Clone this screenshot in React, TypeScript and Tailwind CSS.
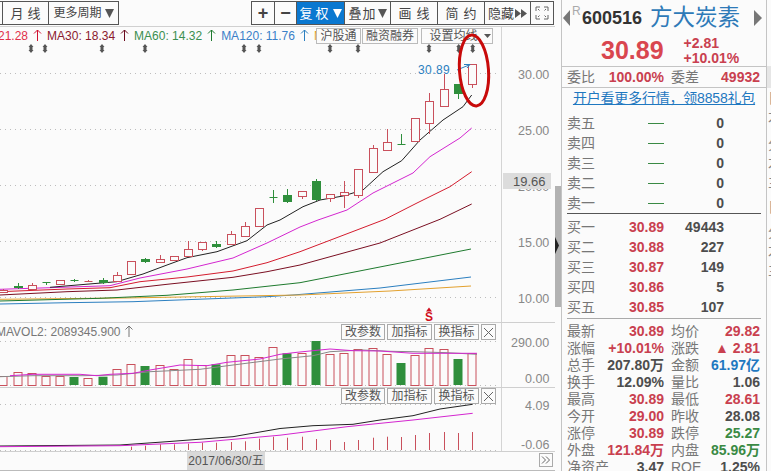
import React from 'react';

const X = (i: number) => 3.3 + 14.2 * i;
const RED = '#c9505c';
const GREEN = '#2f8f3c';

// [index, rising, bodyTop, bodyBottom, wickTop, wickBottom]
const candles: [number, boolean, number, number, number, number][] = [
  [0, true, 290, 292, 289, 293], [1, false, 286, 288, 283, 289], [2, true, 285, 289, 283, 289],
  [3, false, 282, 283, 282, 285], [4, true, 280, 284, 280, 284], [5, false, 280, 281, 279, 282],
  [6, true, 281, 282, 280, 282], [7, false, 280, 283, 278, 284], [8, true, 275, 281, 272, 281],
  [9, true, 261, 274, 261, 274], [10, false, 259, 262, 258, 263], [11, true, 259, 262, 255, 262],
  [12, true, 256, 260, 256, 260], [13, true, 249, 256, 241, 256], [14, true, 242, 249, 242, 251],
  [15, false, 244, 247, 241, 248], [16, true, 234, 244, 231, 244], [17, true, 226, 236, 222, 236],
  [18, true, 208, 226, 208, 226], [19, false, 197, 198, 190, 203], [20, false, 195, 202, 189, 203],
  [21, true, 191, 196, 191, 199], [22, false, 181, 200, 179, 201], [23, true, 194, 198, 194, 202],
  [24, true, 192, 195, 181, 208], [25, true, 169, 195, 169, 198], [26, true, 148, 172, 145, 173],
  [27, true, 142, 150, 129, 150], [28, false, 144, 145, 134, 145], [29, true, 118, 141, 118, 141],
  [30, true, 101, 123, 93, 134], [31, true, 89, 106, 74, 106], [32, false, 84, 94, 84, 99],
  [33, true, 64, 84, 64, 88],
];

const maLines: [string, string][] = [
  ['#2b7fc0', '0,304 67,302.7 133,301.7 267,296.7 293,295 380,288 471,277'],
  ['#e3a12e', '0,299.3 123,298 200,296.7 300,295 390,291 471,286'],
  ['#1e7a2e', '0,301 100,298.3 167,295.3 233,290 300,282.7 390,265 471,249'],
  ['#7a0f22', '0,295 67,291.7 117,290 167,284.3 233,277.3 267,271.7 300,265 380,243 440,219.3 471.7,204'],
  ['#d41c2e', '0,291.7 67,289 110,287.7 140,281.7 187,277 233,271 267,262.7 300,251.7 385,219.3 417,203 450,186.7 471.7,171.7'],
  ['#d426d0', '0,289.3 50,287.7 110,285.7 140,278 187,269 233,258 267,243 300,227 318,220 347,210 373,193 413,173 430,156.7 460,138 471.7,128'],
  ['#222222', '50,287.3 116.7,281.7 143,274 167,265 187,257.7 217,251.7 247,240.7 267,225 280,220 303,206.7 320,200 343,196 363,190 383,171.7 401.7,160.7 420,140 443,120 463,106.7 471.7,95'],
];

// bar top, bottom is y=385; green bars are the falling days
const volTops = [376, 371.7, 373.3, 375.7, 375.7, 377, 378.3, 376.7, 369.3, 364.3, 366, 365.3, 369.3, 359.3, 365.3, 364.3, 355.3, 355.3, 357.3, 347.3, 353.3, 352.7, 341, 354.3, 352.7, 349.3, 348.3, 354, 363, 355, 348.3, 349.3, 359, 353.3];
const volGreen = [5, 7, 10, 15, 20, 22, 28, 32];

const macdTops = [446.7, 445.7, 444.3, 444.3, 443.7, 442.7, 442.7, 442, 441.3, 438.7, 436.7, 437.7, 436.7, 439, 440, 442, 440, 437.7, 436.7, 437, 435, 433, 432, 433, 432];

const markers = [31, 45, 102, 145, 244, 259, 330, 358, 429, 458.7, 472.7];
const grid = [73.5, 129.5, 185.5, 241.5, 297.5];

const Tri = ({ dir = 'down', className }: { dir?: 'down' | 'right' | 'left'; className: string }) => {
  const d = dir === 'down' ? 'M0 0H10L5 10Z' : dir === 'right' ? 'M0 0L10 5L0 10Z' : 'M10 0L0 5L10 10Z';
  return (
    <svg viewBox="0 0 10 10" preserveAspectRatio="none" className={className}>
      <path d={d} fill="currentColor" />
    </svg>
  );
};

const ToolBtn = ({ className, children }: { className: string; children?: React.ReactNode }) => (
  <div className={`h-[24px] -ml-px flex items-center justify-center border border-[#555] whitespace-nowrap ${className}`}>
    {children}
  </div>
);

const UpArrow = ({ color }: { color: string }) => (
  <svg width="9" height="13" viewBox="0 0 9 13" className="shrink-0">
    <path d="M4.5 12V1M1 4.5L4.5 1L8 4.5" fill="none" stroke={color} strokeWidth="1" />
  </svg>
);

const MiniBtn = ({ className, children }: { className: string; children: React.ReactNode }) => (
  <div className={`h-[16px] flex items-center justify-center border border-[#aaa] bg-[#fbfbfb] text-[12px] leading-none text-[#555] whitespace-nowrap ${className}`}>
    {children}
  </div>
);

const IndicatorBar = ({ className }: { className: string }) => (
  <div className={`absolute left-[341px] flex gap-[2px] ${className}`}>
    <MiniBtn className="w-[44px]">改参数</MiniBtn>
    <MiniBtn className="w-[45px]">加指标</MiniBtn>
    <MiniBtn className="w-[45px]">换指标</MiniBtn>
    <MiniBtn className="w-[15px]">
      <svg width="11" height="11" viewBox="0 0 11 11">
        <path d="M1 1L10 10M10 1L1 10" stroke="#666" strokeWidth="1" />
      </svg>
    </MiniBtn>
  </div>
);

const sellRows = ['卖五', '卖四', '卖三', '卖二', '卖一'];
const buyRows: [string, string, string][] = [
  ['买一', '30.89', '49443'],
  ['买二', '30.88', '227'],
  ['买三', '30.87', '149'],
  ['买四', '30.86', '5'],
  ['买五', '30.85', '107'],
];

const r = 'text-[#c9404f]';
const k = 'text-[#4d4d4d]';
const g = 'text-[#3a8a44]';
const stats: [string, string, string, string, string, string][] = [
  ['最新', '30.89', r, '均价', '29.82', r],
  ['涨幅', '+10.01%', r, '涨跌', '▲ 2.81', r],
  ['总手', '207.80万', k, '金额', '61.97亿', 'text-[#1f78c0]'],
  ['换手', '12.09%', k, '量比', '1.06', k],
  ['最高', '30.89', r, '最低', '28.61', r],
  ['今开', '29.00', r, '昨收', '28.08', k],
  ['涨停', '30.89', r, '跌停', '25.27', g],
  ['外盘', '121.84万', r, '内盘', '85.96万', g],
  ['净资产', '3.47', k, 'ROE', '1.25%', k],
];

const Label = ({ children }: { children: React.ReactNode }) => (
  <span className="text-[14px] text-[#777]">{children}</span>
);

const Val = ({ className, children }: { className: string; children: React.ReactNode }) => (
  <span className={`text-[14px] font-bold ${className}`}>{children}</span>
);

const App: React.FC = () => {
  return (
    <div className="w-[771px] h-[471px] flex overflow-hidden bg-[#fbfbfb] leading-none [font-family:'Liberation_Sans','Noto_Sans_CJK_SC',sans-serif]">
      {/* chart column */}
      <div className="w-[555px] shrink-0 flex flex-col">
        <div className="h-[27px] shrink-0 pt-px pr-px flex border-b border-[#d0d0d0] text-[13px] text-[#444]">
          <ToolBtn className="w-[4px]" />
          <ToolBtn className="w-[47px] tracking-[4px] pl-[4px]">月线</ToolBtn>
          <ToolBtn className="w-[71px] gap-[3px] text-[12px]">
            更多周期
            <Tri className="w-[9px] h-[9px] text-[#555]" />
          </ToolBtn>
          <div className="flex-1" />
          <ToolBtn className="w-[24px]"><span className="font-bold text-[18px]">+</span></ToolBtn>
          <ToolBtn className="w-[23px]"><span className="font-bold text-[18px]">−</span></ToolBtn>
          <ToolBtn className="w-[49px] gap-px bg-[#0a78d0] text-white tracking-[3px]">
            复权
            <Tri className="w-[9px] h-[9px] text-white" />
          </ToolBtn>
          <ToolBtn className="w-[47px] gap-[1px] tracking-[1px]">
            叠加
            <Tri className="w-[9px] h-[9px] text-[#555]" />
          </ToolBtn>
          <ToolBtn className="w-[48px] tracking-[5px] pl-[5px]">画线</ToolBtn>
          <ToolBtn className="w-[48px] tracking-[5px] pl-[5px]">简约</ToolBtn>
          <ToolBtn className="w-[47px]">
            隐藏
            <Tri dir="right" className="w-[6px] h-[9px] ml-px text-[#555]" />
            <Tri dir="right" className="w-[6px] h-[9px] text-[#555]" />
          </ToolBtn>
          <ToolBtn className="w-[24px]">
            <svg width="14" height="14" viewBox="0 0 14 14" fill="none" stroke="#666" strokeWidth="1">
              <path d="M1 5V1H5M9 1H13V5M13 9V13H9M5 13H1V9M3 3L4.5 4.5M11 3L9.5 4.5M11 11L9.5 9.5M3 11L4.5 9.5" />
            </svg>
          </ToolBtn>
        </div>

        {/* price pane */}
        <div className="h-[296px] shrink-0 relative border-b border-[#cfcfcf]">
          <svg width="555" height="295" viewBox="0 27 555 295" className="block">
            {grid.map((y) => (
              <line key={y} x1="0" x2="500" y1={y} y2={y} stroke="#bdbdbd" strokeDasharray="1 4" />
            ))}
            <line x1="501.5" x2="501.5" y1="27" y2="322" stroke="#d4d4d4" />
            {maLines.map(([c, pts]) => (
              <polyline key={c} points={pts} fill="none" stroke={c} strokeWidth="1" />
            ))}
            {candles.map(([i, up, t, b, wt, wb]) => {
              const x = Math.round(X(i)) + 0.5;
              const c = up ? RED : GREEN;
              return (
                <g key={i}>
                  <line x1={x} x2={x} y1={wt} y2={wb} stroke={c} />
                  {b - t <= 1 ? (
                    <line x1={x - 4} x2={x + 4} y1={t + 0.5} y2={t + 0.5} stroke={c} />
                  ) : up ? (
                    <rect x={x - 4} y={t + 0.5} width="8" height={b - t} fill="#fbfbfb" stroke={c} />
                  ) : (
                    <rect x={x - 4.5} y={t} width="9" height={b - t} fill={c} />
                  )}
                </g>
              );
            })}
            {markers.map((x) => (
              <path key={x} d={`M${x} 44L${x + 2.5} 47H${x + 1.5}V50H${x + 2.5}L${x} 53L${x - 2.5} 50H${x - 1.5}V47H${x - 2.5}Z`} fill="#555" />
            ))}
            <text x="418" y="74" fontSize="12" fill="#2b7fc0" letterSpacing="0.4">30.89</text>
            <path d="M457 70L469 65M464 64.5L470 64.5L467 68" fill="none" stroke="#2b7fc0" />
            <g fontSize="12.5" fill="#888">
              <text x="518" y="79">30.00</text>
              <text x="518" y="135">25.00</text>
              <text x="518" y="191">20.00</text>
              <text x="518" y="247">15.00</text>
              <text x="518" y="303">10.00</text>
            </g>
            <rect x="503" y="173" width="48" height="16" fill="#dcdcdc" />
            <text x="513" y="186" fontSize="13" fill="#555">19.66</text>
            <path d="M429 307.5L432 311.5H426Z" fill="#d01020" />
            <text x="425" y="320.5" fontSize="12" fontWeight="bold" fill="#d01020">S</text>
          </svg>
          <div className="absolute left-[-2px] top-[2px] flex items-center gap-[5px] text-[12px] whitespace-nowrap">
            <span className="text-[#e0304a]">21.28</span>
            <UpArrow color="#d01030" />
            <span className="text-[#8b1a2e]">MA30: 18.34</span>
            <UpArrow color="#6a0a1e" />
            <span className="text-[#3a8f50]">MA60: 14.32</span>
            <UpArrow color="#1e7a2e" />
            <span className="text-[#3a80c8]">MA120: 11.76</span>
            <UpArrow color="#2b7fc0" />
            <span className="text-[#e8a030]">M</span>
          </div>
          <div className="absolute left-[316px] top-[1px] flex gap-[1px]">
            <MiniBtn className="w-[45px] border-[#bbb]">沪股通</MiniBtn>
            <MiniBtn className="w-[56px] border-[#bbb]">融资融券</MiniBtn>
            <MiniBtn className="w-[72px] ml-[2px] gap-[6px] border-[#bbb] pl-[6px]">
              设置均线
              <Tri className="w-[7px] h-[4px] text-[#555]" />
            </MiniBtn>
          </div>
          <svg width="555" height="295" viewBox="0 27 555 295" className="absolute left-0 top-0 pointer-events-none">
            <ellipse cx="474" cy="70.5" rx="14.5" ry="35.5" transform="rotate(-4 474 70.5)" fill="none" stroke="#c80a0a" strokeWidth="3" />
          </svg>
        </div>

        {/* volume pane */}
        <div className="h-[64px] shrink-0 relative">
          <svg width="555" height="64" viewBox="0 323 555 64" className="block">
            <line x1="0" x2="500" y1="341.5" y2="341.5" stroke="#bdbdbd" strokeDasharray="1 4" />
            <line x1="0" x2="500" y1="385.5" y2="385.5" stroke="#bdbdbd" strokeDasharray="1 4" />
            <line x1="501.5" x2="501.5" y1="323" y2="387" stroke="#d4d4d4" />
            {volTops.map((t, i) => {
              const x = Math.round(X(i));
              return volGreen.includes(i) ? (
                <rect key={i} x={x - 4.5} y={t} width="9" height={385 - t} fill={GREEN} />
              ) : (
                <rect key={i} x={x - 4} y={Math.round(t) + 0.5} width="8" height={385 - Math.round(t)} fill="none" stroke={RED} />
              );
            })}
            <polyline points="0,376.7 33,375.7 83,375.7 117,375 150,371.7 200,369.3 233,365 280,359 297,357.3 313,355.7 330,351.7 363,350 390,351.3 413,351.7 447,352.7 477,354.3" fill="none" stroke="#888" />
            <polyline points="10,375.7 33,374.3 80,374.3 97,375.7 110,374.3 133,373.3 150,370 180,365 207,365.7 227,362.3 260,359 280,354.3 297,352.3 313,350.7 330,349 353,350.7 380,351 413,353.3 447,353.3 477,353.3" fill="none" stroke="#d426d0" />
            <text x="-4" y="336" fontSize="12" fill="#777">MAVOL2: 2089345.900</text>
            <path d="M129 337V326M125.5 329.5L129 326L132.5 329.5" fill="none" stroke="#777" />
            <g fontSize="12.5" fill="#888">
              <text x="511" y="347">290.00</text>
              <text x="525" y="383">0.00</text>
            </g>
          </svg>
          <IndicatorBar className="top-[1px]" />
        </div>

        {/* macd pane */}
        <div className="h-[65px] shrink-0 relative border-b border-t border-[#cfcfcf]">
          <svg width="555" height="63" viewBox="0 388 555 63" className="block">
            <line x1="0" x2="500" y1="404.5" y2="404.5" stroke="#bdbdbd" strokeDasharray="1 4" />
            <line x1="0" x2="500" y1="450.5" y2="450.5" stroke="#bdbdbd" strokeDasharray="1 4" />
            <line x1="501.5" x2="501.5" y1="388" y2="451" stroke="#d4d4d4" />
            {macdTops.map((t, i) => {
              const x = Math.round(X(i + 9)) + 0.5;
              return <line key={i} x1={x} x2={x} y1={t} y2="450" stroke={RED} />;
            })}
            <polyline points="0,446 120,445 167,441.7 233,436.7 280,428.5 313,425.7 353,424.3 380,420 413,415.7 440,409 472.7,404.3" fill="none" stroke="#222" />
            <polyline points="0,446.7 120,445.7 200,442.3 280,435.2 347,426.7 413,420 472.7,413.3" fill="none" stroke="#d426d0" />
            <g fontSize="12.5" fill="#888">
              <text x="525" y="410">4.09</text>
              <text x="521" y="449">-0.06</text>
            </g>
          </svg>
          <IndicatorBar className="top-0" />
        </div>

        {/* date footer */}
        <div className="h-[19px] shrink-0 flex items-start border-b border-[#bbb] pl-[187px] pr-[2px]">
          <div className="w-[78px] h-[18px] flex items-center justify-center bg-[#d9d9d9] text-[12px] text-[#555]">
            2017/06/30/五
          </div>
          <div className="flex-1" />
          <div className="w-[14px] h-[14px] mt-[1px] flex items-center justify-center border border-[#aaa]">
            <svg width="10" height="8" viewBox="0 0 10 8" fill="none" stroke="#666">
              <path d="M1 0.5L4.5 4L1 7.5M5 0.5L8.5 4L5 7.5" />
            </svg>
          </div>
        </div>
      </div>

      {/* splitter */}
      <div className="w-[6px] shrink-0 relative">
        <div className="absolute left-0 right-0 top-[186px] h-[121px] bg-[#b2b2b2]" />
        <Tri dir="right" className="absolute left-0 top-[237px] w-[4px] h-[17px] text-[#222]" />
      </div>

      {/* quote panel */}
      <div className="w-[206px] shrink-0 border-l border-r border-[#c4c4c4]">
        <div className="h-[66px] flex flex-col">
          <div className="h-[36px] flex items-center">
            <Tri dir="left" className="w-[7px] h-[16px] ml-px text-[#777]" />
            <span className="w-[10px] ml-[2px] self-start mt-[5px] text-[12px] text-[#aaa]">R</span>
            <span className="text-[18px] font-bold text-[#333]">600516</span>
            <span className="ml-[8px] text-[22.5px] text-[#2e7ab8]">方大炭素</span>
            <Tri dir="right" className="w-[8px] h-[16px] ml-[14px] text-[#777]" />
          </div>
          <div className="flex items-center pl-[39px]">
            <span className="text-[25px] font-bold text-[#d9464f]">30.89</span>
            <div className="ml-[20px] flex flex-col gap-[1px] text-[14px] font-bold text-[#c9404f]">
              <span>+2.81</span>
              <span>+10.01%</span>
            </div>
          </div>
        </div>
        <div className="h-[22px] flex items-center justify-between pl-[5px] pr-[6px] border-y border-[#c4c4c4]">
          <div className="w-[97px] flex justify-between">
            <Label>委比</Label>
            <Val className={r}>100.00%</Val>
          </div>
          <div className="w-[89px] flex justify-between">
            <Label>委差</Label>
            <Val className={r}>49932</Val>
          </div>
        </div>
        <div className="h-[25px] pt-[3px] flex justify-center">
          <span className="h-[16px] text-[14px] tracking-[-0.2px] text-[#1f78c0] underline whitespace-nowrap">开户看更多行情，领8858礼包</span>
        </div>
        <div className="border-b border-[#555] mx-[5px] mb-[3px]">
          {sellRows.map((s) => (
            <div key={s} className="h-[20px] grid grid-cols-[42px_55px_60px] items-center">
              <Label>{s}</Label>
              <div className="justify-self-end w-[16px] h-px bg-[#3a8a44]" />
              <Val className={`text-right ${k}`}>0</Val>
            </div>
          ))}
        </div>
        <div className="border-b border-[#aaa] mx-[5px] pb-px">
          {buyRows.map(([s, p, q]) => (
            <div key={s} className="h-[20px] grid grid-cols-[42px_55px_60px] items-center">
              <Label>{s}</Label>
              <Val className={`text-right ${r}`}>{p}</Val>
              <Val className={`text-right ${k}`}>{q}</Val>
            </div>
          ))}
        </div>
        <div className="pl-[5px] pt-[3px]">
          {stats.map(([a, av, ac, b, bv, bc]) => (
            <div key={a} className="h-[17px] grid grid-cols-[97px_89px] gap-x-[7px] items-center whitespace-nowrap">
              <div className="flex justify-between">
                <Label>{a}</Label>
                <Val className={ac}>{av}</Val>
              </div>
              <div className="flex justify-between">
                <Label>{b}</Label>
                <Val className={bc}>{bv}</Val>
              </div>
            </div>
          ))}
        </div>
      </div>

      {/* next panel, cut off by the window */}
      <div className="flex-1 overflow-hidden flex flex-col text-[14px] text-[#888] whitespace-nowrap">
        <div className="h-[22px] mt-[66px] shrink-0 bg-[#e6e6e6]" />
        <div className="pl-px pt-[3px] flex flex-col gap-[5px]">
          <span>日</span>
          <span>才</span>
          <span className="mt-[8px]">分</span>
          <span>才</span>
          <span>主</span>
          <span className="mt-[6px]">日</span>
          <span className="mt-[6px]">分</span>
          <span>才</span>
          <span>主</span>
        </div>
      </div>
    </div>
  );
};

export default App;
